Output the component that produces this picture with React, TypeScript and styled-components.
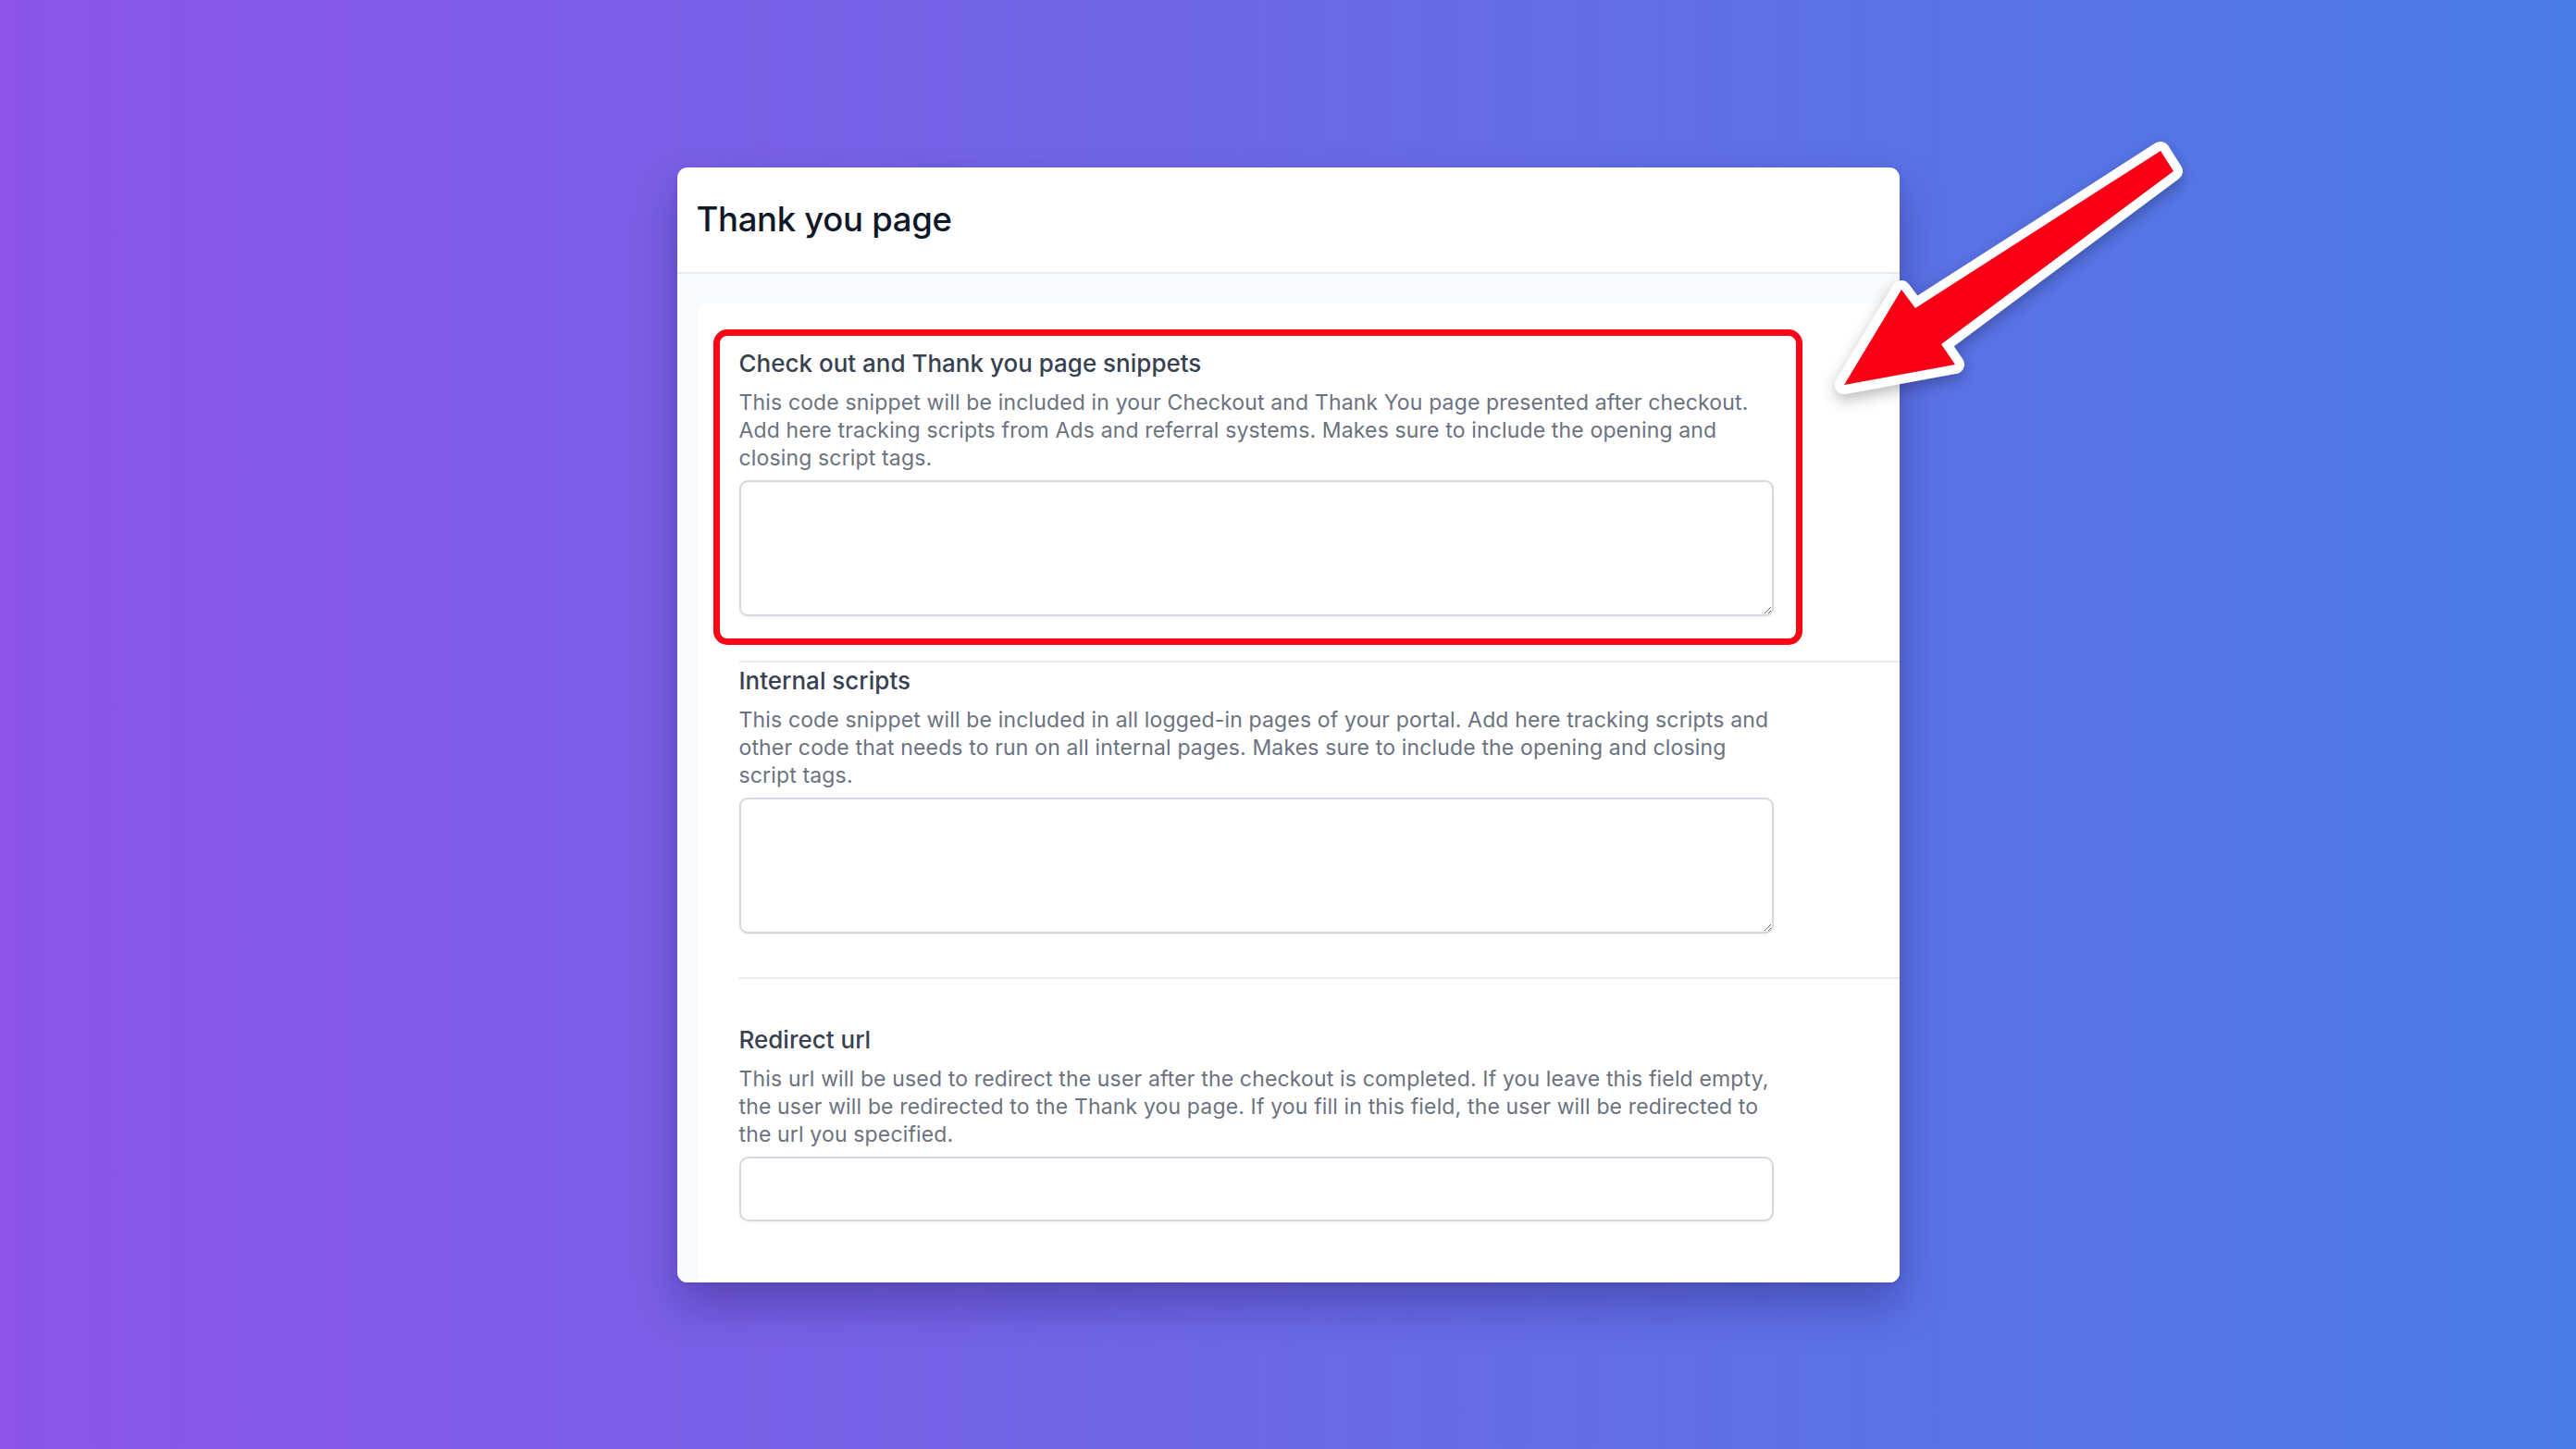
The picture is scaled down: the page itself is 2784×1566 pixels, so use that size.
import React from 'react';
import styled, { createGlobalStyle } from 'styled-components';

const GlobalStyle = createGlobalStyle`
  html, body {
    margin: 0;
    padding: 0;
  }
  body {
    font-family: Inter, 'Noto Sans', 'Liberation Sans', sans-serif;
    -webkit-font-smoothing: antialiased;
  }
`;

interface Field {
  title: string;
  description: string;
  kind: 'textarea' | 'input';
}

const fields: Field[] = [
  {
    title: 'Check out and Thank you page snippets',
    description:
      'This code snippet will be included in your Checkout and Thank You page presented after checkout. Add here tracking scripts from Ads and referral systems. Makes sure to include the opening and closing script tags.',
    kind: 'textarea',
  },
  {
    title: 'Internal scripts',
    description:
      'This code snippet will be included in all logged-in pages of your portal. Add here tracking scripts and other code that needs to run on all internal pages. Makes sure to include the opening and closing script tags.',
    kind: 'textarea',
  },
  {
    title: 'Redirect url',
    description:
      'This url will be used to redirect the user after the checkout is completed. If you leave this field empty, the user will be redirected to the Thank you page. If you fill in this field, the user will be redirected to the url you specified.',
    kind: 'input',
  },
];

const sectionSpacing = [
  { top: 47, bottom: 48 },
  { top: 2, bottom: 47 },
  { top: 48, bottom: 66 },
];

const ArrowMark: React.FC = () => (
  <ArrowSvg viewBox='1960 130 420 320' width='420' height='320'>
    <defs>
      <filter id='arrowShadow' x='-20%' y='-20%' width='140%' height='140%'>
        <feDropShadow dx='0' dy='6' stdDeviation='8' floodColor='#000' floodOpacity='0.28' />
      </filter>
    </defs>
    <polygon
      points='2335,163 2349,185 2098,372 2113,394 1993,416 2055,313 2070,333'
      fill='#f90617'
      stroke='#fff'
      strokeWidth='20'
      strokeLinejoin='round'
      paintOrder='stroke'
      filter='url(#arrowShadow)'
    />
  </ArrowSvg>
);

const App: React.FC = () => {
  return (
    <Page>
      <GlobalStyle />
      <Card>
        <Header>
          <Title>Thank you page</Title>
        </Header>
        <Body>
          <Panel>
            {fields.map((field, i) => (
              <Section key={field.title} $top={sectionSpacing[i].top} $bottom={sectionSpacing[i].bottom} $divider={i > 0}>
                {i === 0 && <Highlight />}
                <FieldTitle>{field.title}</FieldTitle>
                <FieldDescription>{field.description}</FieldDescription>
                {field.kind === 'textarea' ? <TextArea /> : <TextInput type='text' />}
              </Section>
            ))}
          </Panel>
        </Body>
      </Card>
      <ArrowMark />
    </Page>
  );
};

const Page = styled.div`
  position: relative;
  min-height: 100vh;
  display: flex;
  align-items: center;
  justify-content: center;
  background: linear-gradient(90deg, #8b55e6 0%, #6b68e6 50%, #4a7be6 100%);
  overflow: hidden;
`;

const Card = styled.div`
  width: 1321px;
  background-color: #fff;
  border-radius: 11px;
  overflow: hidden;
  box-shadow: rgb(20 10 80 / 30%) 0px 24px 48px 0px, rgb(0 0 0 / 8%) 0px 2px 6px 0px;
`;

const Header = styled.div`
  box-sizing: border-box;
  height: 115px;
  display: flex;
  align-items: center;
  padding: 0 0 0 21px;
  border-bottom: 2px solid #e8eaee;
`;

const Title = styled.h1`
  margin: 0;
  font-size: 36.5px;
  font-weight: 500;
  letter-spacing: -0.3px;
  color: #111827;
`;

const Body = styled.div`
  background-color: #f9fafb;
  padding: 32px 0 0 21px;
`;

const Panel = styled.div`
  background-color: #fff;
  border-top-left-radius: 12px;
  padding-left: 46px;
`;

const Section = styled.div<{ $top: number; $bottom: number; $divider: boolean }>`
  position: relative;
  padding: ${(p) => p.$top}px 136px ${(p) => p.$bottom}px 0;
  border-top: ${(p) => (p.$divider ? '2px solid #e9ebef' : 'none')};
`;

const Highlight = styled.div`
  position: absolute;
  left: -28px;
  top: 28px;
  width: 1177px;
  height: 341px;
  box-sizing: border-box;
  border: 7px solid #f90617;
  border-radius: 15px;
  pointer-events: none;
`;

const FieldTitle = styled.div`
  font-size: 26px;
  line-height: 36px;
  font-weight: 500;
  color: #374151;
  margin-bottom: 9px;
`;

const FieldDescription = styled.p`
  margin: 0 0 9px;
  font-size: 23px;
  line-height: 30px;
  letter-spacing: 0.15px;
  color: #6b7280;
`;

const TextArea = styled.textarea`
  display: block;
  box-sizing: border-box;
  width: 100%;
  height: 147px;
  border: 2px solid #d5d8de;
  border-radius: 9px;
  box-shadow: rgb(0 0 0 / 6%) 0px 1px 3px 0px;
  outline: none;
  resize: vertical;
  background-color: #fff;
`;

const TextInput = styled.input`
  display: block;
  box-sizing: border-box;
  width: 100%;
  height: 70px;
  border: 2px solid #d5d8de;
  border-radius: 10px;
  box-shadow: rgb(0 0 0 / 6%) 0px 1px 3px 0px;
  outline: none;
  background-color: #fff;
`;

const ArrowSvg = styled.svg`
  position: absolute;
  left: 1960px;
  top: 130px;
  overflow: visible;
`;

export default App;
